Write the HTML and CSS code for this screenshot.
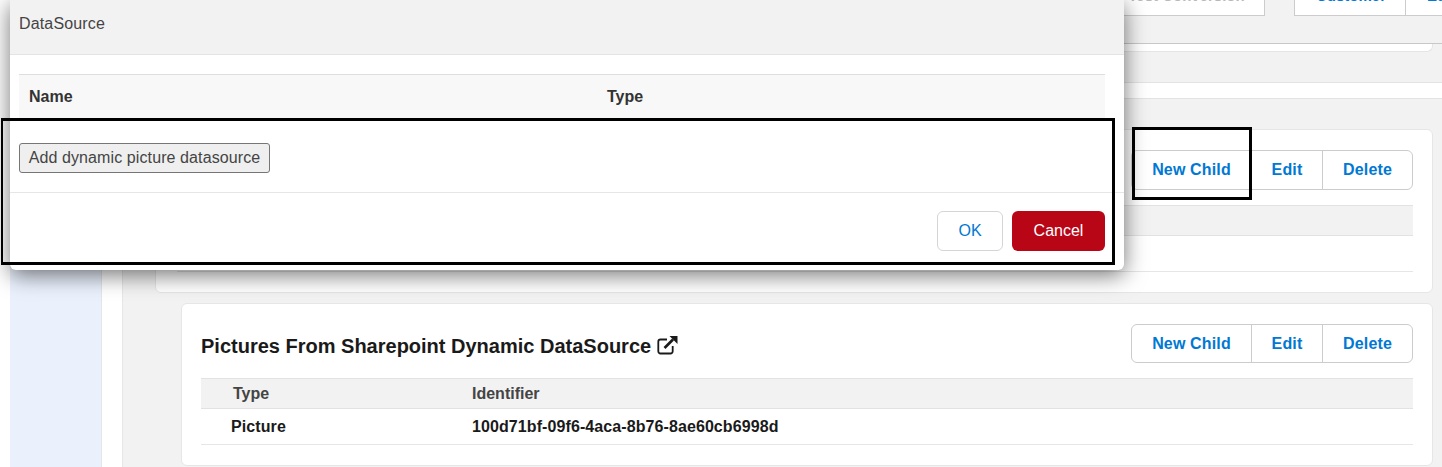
FILE: index.html
```html
<!DOCTYPE html>
<html lang="en">
<head>
<meta charset="utf-8">
<title>DataSource</title>
<link rel="stylesheet" href="styles.css">
</head>
<body>
<div class="page">
  <aside class="nav"></aside>
  <main class="main">
    <div class="topbar">
      <div class="top-btn"><span class="top-label">Test Conversion</span></div>
      <div class="top-group"><span class="top-seg">Customer</span><span class="top-seg last">Edit</span></div>
    </div>
    <div class="strip-card"></div>
    <div class="band"></div>
    <section class="card first">
      <div class="card-head">
        <div class="btn-group"><a class="seg child">New Child</a><a class="seg edit">Edit</a><a class="seg del">Delete</a></div>
      </div>
      <div class="thead"></div>
      <div class="trow"></div>
    </section>
    <section class="card second">
      <div class="card-head">
        <h2 class="card-title">Pictures From Sharepoint Dynamic DataSource
          <svg class="ext" viewBox="0 0 21 20" width="21" height="20" aria-hidden="true"><path d="M10 4.500H3.500A2.200 2.200 0 0 0 1.300 6.700V16.300A2.200 2.200 0 0 0 3.500 18.500H13.500A2.200 2.200 0 0 0 15.700 16.300V11" fill="none" stroke="#1a1a1a" stroke-width="1.800"/><path d="M7.500 13L16 4.500" fill="none" stroke="#1a1a1a" stroke-width="2.600"/><path d="M12.500 1H20.500V9Z" fill="#1a1a1a"/></svg>
        </h2>
        <div class="btn-group"><a class="seg child">New Child</a><a class="seg edit">Edit</a><a class="seg del">Delete</a></div>
      </div>
      <div class="thead"><span class="c1">Type</span><span>Identifier</span></div>
      <div class="trow"><span class="c1">Picture</span><span>100d71bf-09f6-4aca-8b76-8ae60cb6998d</span></div>
    </section>
  </main>
</div>

<div class="modal">
  <div class="modal-head">DataSource</div>
  <div class="modal-body">
    <div class="ds-head"><span class="ds-name">Name</span><span>Type</span></div>
    <button class="add-btn" type="button">Add dynamic picture datasource</button>
  </div>
  <div class="modal-foot">
    <button class="ok" type="button">OK</button>
    <button class="cancel" type="button">Cancel</button>
  </div>
</div>

<div class="mark mark-wide"></div>
<div class="mark mark-child"></div>
</body>
</html>
```
FILE: styles.css
```css
* { box-sizing: border-box; }
html, body { margin: 0; padding: 0; height: 467px; overflow: hidden; background: #fff; font-family: "Liberation Sans", Arial, sans-serif; }
.page { display: flex; height: 467px; padding-left: 10px; }
.nav { width: 92px; flex: none; background: #eaf1fd; border-right: 1px solid #e3e5e8; }
.main { flex: 1; min-width: 0; margin-left: 20px; background: #f2f2f2; border-left: 1px solid #e6e6e6; overflow: hidden; }

.topbar { display: flex; align-items: flex-start; gap: 29px; height: 44px; padding-left: 985px; border-bottom: 1px solid #c8c8c8; }
.top-btn, .top-group { height: 16px; background: #fff; border: 1px solid #ccc; border-top: 0; overflow: hidden; font-size: 15px; font-weight: 700; line-height: 0; }
.top-btn { width: 157px; flex: none; display: flex; justify-content: center; color: #b8b8b8; }
.top-label { display: block; margin-top: -4px; }
.top-group { display: flex; flex: none; width: 160px; border-right: 0; color: #0078d4; }
.top-seg { display: block; width: 111px; flex: none; height: 20px; margin-top: -4px; padding-left: 21px; border-right: 1px solid #ccc; line-height: 0; }
.top-seg.last { width: 48px; border-right: 0; }

.strip-card { width: 1278px; height: 8px; margin-left: 32px; background: #fff; border: 1px solid #e5e5e5; border-top: 0; border-radius: 0 0 6px 6px; }
.band { height: 17px; margin-top: 30px; background: #fff; border-top: 1px solid #e3e3e3; border-bottom: 1px solid #e3e3e3; }

.card { background: #fff; border: 1px solid #e6e6e6; border-radius: 6px; padding: 20px 19px 0; }
.card.first { width: 1278px; height: 164px; margin: 30px 0 0 32px; padding-left: 21px; }
.card.second { width: 1252px; height: 163px; margin: 10px 0 0 58px; padding-left: 19px; }
.card-head { display: flex; justify-content: flex-end; align-items: flex-start; }
.card.first .card-head { height: 55px; }
.card.second .card-head { height: 54px; justify-content: space-between; }
.card-title { display: flex; align-items: center; gap: 6px; margin: 10px 0 0; font-size: 20px; line-height: 24px; font-weight: 700; color: #1a1a1a; }
.ext { display: block; margin-top: -3px; }

.btn-group { display: flex; height: 39px; background: #fff; border: 1px solid #ccc; border-radius: 6px; font-size: 16px; font-weight: 700; letter-spacing: .15px; color: #0078d4; }
.card.first .btn-group { height: 40px; }
.seg { display: flex; align-items: center; justify-content: center; border-right: 1px solid #ccc; }
.seg.child { width: 120px; }
.seg.edit { width: 71px; }
.seg.del { width: 89px; border-right: 0; }

.thead { display: flex; align-items: center; height: 31px; background: #f2f2f2; border-top: 1px solid #e2e2e2; border-bottom: 1px solid #e2e2e2; font-size: 16px; font-weight: 700; color: #444; }
.thead .c1 { width: 271px; padding-left: 32px; }
.trow { display: flex; align-items: center; height: 36px; border-bottom: 1px solid #e6e6e6; font-size: 16px; font-weight: 700; letter-spacing: .09px; color: #1a1a1a; }
.trow .c1 { width: 271px; padding-left: 30px; }

.modal { position: absolute; left: 10px; top: 0; display: flex; flex-direction: column; width: 1114px; height: 270px; background: #fff; border-radius: 0 0 6px 6px; box-shadow: 0 5px 22px rgba(0,0,0,.55); }
.modal-head { height: 55px; padding: 15px 0 0 9px; background: #f2f2f2; border-bottom: 1px solid #e4e4e4; font-size: 16px; line-height: 18px; letter-spacing: .15px; color: #444; }
.modal-body { height: 138px; padding: 19px 19px 0 9px; border-bottom: 1px solid #e6e6e6; }
.ds-head { display: flex; align-items: center; height: 45px; padding-left: 10px; background: #f8f8f8; border-top: 1px solid #dedede; font-size: 16px; font-weight: 700; color: #333; }
.ds-name { width: 578px; }
.add-btn { display: block; width: 251px; height: 30px; margin-top: 24px; padding: 0; background: #efefef; border: 1px solid #767676; border-radius: 3px; font: 16px "Liberation Sans", Arial, sans-serif; letter-spacing: .1px; color: #444; }
.modal-foot { display: flex; justify-content: flex-end; gap: 9px; padding: 18px 19px 0 0; }
.ok, .cancel { height: 40px; padding: 0; border-radius: 6px; font: 16px "Liberation Sans", Arial, sans-serif; }
.ok { width: 66px; background: #fff; border: 1px solid #d5d5d5; color: #0078d4; }
.cancel { width: 93px; background: #b90617; border: 0; color: #fff; }

.mark { position: absolute; background: transparent; border: 3px solid #000; }
.mark-wide { left: 1px; top: 118px; width: 1114px; height: 147px; border-left-width: 2px; }
.mark-child { left: 1132px; top: 127px; width: 120px; height: 73px; }
```
